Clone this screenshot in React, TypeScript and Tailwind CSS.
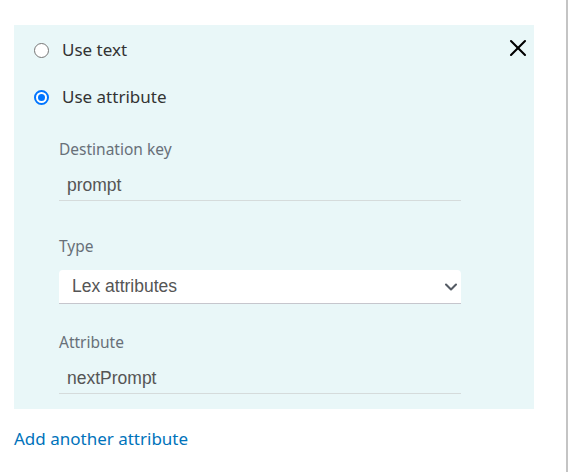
import React, { useState } from 'react';
import { X, ChevronDown } from 'lucide-react';

const Radio = ({ checked }: { checked: boolean }) =>
  checked ? (
    <span className="w-[15px] h-[15px] rounded-full border-2 border-[#0075ff] bg-white flex items-center justify-center shrink-0">
      <span className="w-[7px] h-[7px] rounded-full bg-[#0075ff]" />
    </span>
  ) : (
    <span className="w-[15px] h-[15px] rounded-full border border-[#767676] bg-white shrink-0" />
  );

const App = () => {
  const [mode, setMode] = useState<'text' | 'attribute'>('attribute');

  return (
    <div className="w-[568px] h-[472px] bg-white border-r-2 border-[#c4c4c4] font-['Noto_Sans',sans-serif] overflow-hidden">
      <div className="pt-[25px] pl-[14px]">
        {/* Attribute card */}
        <div className="w-[520px] bg-[#e9f7f8] pb-[15px]">
          <div className="h-[50px] flex items-center justify-between pl-[20px] pr-[2px]">
            <button onClick={() => setMode('text')} className="flex items-center gap-[13px] text-[17px] text-[#333]">
              <Radio checked={mode === 'text'} />
              Use text
            </button>
            <X size={28} strokeWidth={1.8} className="text-black -mt-[4px]" />
          </div>
          <div className="h-[44px] flex items-center pl-[20px]">
            <button onClick={() => setMode('attribute')} className="flex items-center gap-[13px] text-[17px] text-[#333]">
              <Radio checked={mode === 'attribute'} />
              Use attribute
            </button>
          </div>

          <div className="pl-[45px] w-[447px] mt-[20px]">
            <div className="text-[15.5px] leading-[20px] text-[#687078]">Destination key</div>
            <div className="mt-[8px] h-[34px] pt-[3px] border-b border-[#d5dbdb] flex items-center pl-[8px] font-['Liberation_Sans',sans-serif] text-[17.5px] text-[#555]">
              prompt
            </div>

            <div className="mt-[35px] text-[15.5px] leading-[20px] text-[#687078]">Type</div>
            <div className="mt-[14px] h-[34px] bg-white rounded-t-[4px] border-b border-[#c6c6cd] flex items-center justify-between pl-[13px] font-['Liberation_Sans',sans-serif] text-[17.5px] text-[#555]">
              Lex attributes
              <ChevronDown size={20} strokeWidth={2.5} className="text-[#545b64]" />
            </div>

            <div className="mt-[28px] text-[15.5px] leading-[20px] text-[#687078]">Attribute</div>
            <div className="mt-[8px] h-[34px] pt-[3px] border-b border-[#d5dbdb] flex items-center pl-[8px] font-['Liberation_Sans',sans-serif] text-[17.5px] text-[#555]">
              nextPrompt
            </div>
          </div>
        </div>

        <div className="mt-[18px] text-[17px] leading-[24px] text-[#0073bb]">Add another attribute</div>
      </div>
    </div>
  );
};

export default App;
